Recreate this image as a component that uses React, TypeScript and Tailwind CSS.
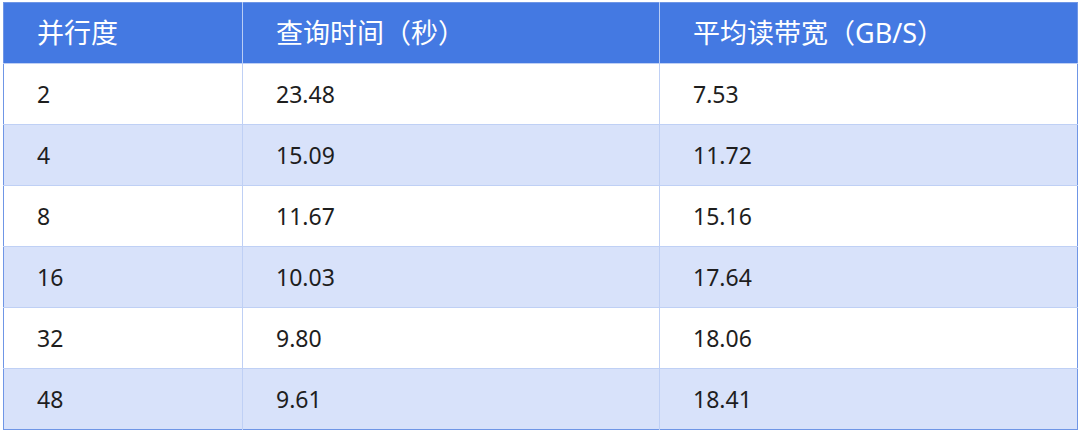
const rows = [
    ['2', '23.48', '7.53'],
    ['4', '15.09', '11.72'],
    ['8', '11.67', '15.16'],
    ['16', '10.03', '17.64'],
    ['32', '9.80', '18.06'],
    ['48', '9.61', '18.41'],
];

export default function App() {
    return (
        <div className="w-[1080px] h-[432px] bg-white pt-[2px] pl-[3px]" style={{ fontFamily: '"Noto Sans", "Noto Sans CJK SC", sans-serif' }}>
            <table className="w-[1074px] border-collapse border border-[#6f96e6] text-[#1e1e1e] table-fixed">
                <colgroup>
                    <col className="w-[239px]" />
                    <col className="w-[417px]" />
                    <col className="w-[418px]" />
                </colgroup>
                <thead>
                    <tr className="h-[61px] bg-[#4479e2] text-white text-[27px]">
                        <th className="text-left font-normal pl-[33px] border-r border-[#b9cdf5]">并行度</th>
                        <th className="text-left font-normal pl-[33px] border-r border-[#b9cdf5]">查询时间（秒）</th>
                        <th className="text-left font-normal pl-[33px]">平均读带宽（GB/S）</th>
                    </tr>
                </thead>
                <tbody>
                    {rows.map((r, i) => (
                        <tr key={i} className={`h-[61px] text-[23px] border-t border-[#bfd0f5] ${i % 2 === 1 ? 'bg-[#d8e2fa]' : 'bg-white'}`}>
                            <td className="pl-[33px] border-r border-[#bfd0f5]">{r[0]}</td>
                            <td className="pl-[33px] border-r border-[#bfd0f5]">{r[1]}</td>
                            <td className="pl-[33px]">{r[2]}</td>
                        </tr>
                    ))}
                </tbody>
            </table>
        </div>
    );
}
